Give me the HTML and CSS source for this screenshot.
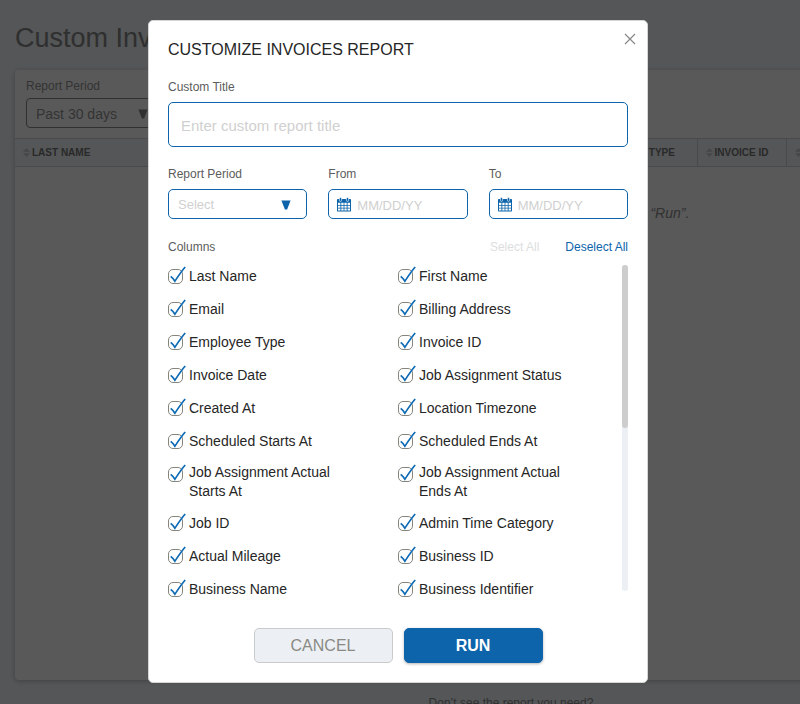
FILE: index.html
```html
<!DOCTYPE html>
<html lang="en">
<head>
<meta charset="utf-8">
<title>Custom Invoices</title>
<link rel="stylesheet" href="styles.css">
</head>
<body>
<svg class="sprite" aria-hidden="true">
  <symbol id="tick" viewBox="0 0 18 22"><path d="M2.7 11.4C4.3 12.6 5.7 14.2 6.9 16.2C9 13 13 6.8 17.2 2" fill="none" stroke="currentColor" stroke-width="1.7"/></symbol>
  <symbol id="arrow" viewBox="0 0 10 10"><path d="M0.4 0.5H9.6L6.1 9.6H3.9Z" fill="currentColor"/></symbol>
  <symbol id="sort" viewBox="0 0 7 9"><path d="M0 3.8L3.5 0L7 3.8ZM0 5.2H7L3.5 9Z" fill="currentColor"/></symbol>
  <symbol id="calendar" viewBox="0 0 15 15">
    <path d="M0 3C0 2.4.4 2 1 2H13C13.6 2 14 2.4 14 3V13.5C14 14.1 13.6 14.5 13 14.5H1C.4 14.5 0 14.1 0 13.5Z" fill="currentColor"/>
    <path d="M1 5.8H3.4V7.9H1ZM4.3 5.8H6.6V7.9H4.3ZM7.4 5.8H9.7V7.9H7.4ZM10.6 5.8H13V7.9H10.6ZM1 8.8H3.4V10.7H1ZM4.3 8.8H6.6V10.7H4.3ZM7.4 8.8H9.7V10.7H7.4ZM10.6 8.8H13V10.7H10.6ZM1 11.5H3.4V13.5H1ZM4.3 11.5H6.6V13.5H4.3ZM7.4 11.5H9.7V13.5H7.4ZM10.6 11.5H13V13.5H10.6Z" fill="#fff"/>
    <rect x="2.4" y=".6" width="2.2" height="3.8" rx="1.1" fill="currentColor" stroke="#fff" stroke-width=".6"/>
    <rect x="9.4" y=".6" width="2.2" height="3.8" rx="1.1" fill="currentColor" stroke="#fff" stroke-width=".6"/>
  </symbol>
</svg>

<main class="page">
  <h1 class="page-title">Custom Invoices</h1>
  <section class="report">
    <div class="filters">
      <label class="filter-label" for="page-period">Report Period</label>
      <div class="select-wrap page-select">
        <select id="page-period"><option>Past 30 days</option></select>
        <svg class="arrow"><use href="#arrow"/></svg>
      </div>
    </div>
    <table class="grid">
      <colgroup><col class="c-wide"><col class="c-wide"><col class="c-wide"><col class="c-type"><col class="c-id"><col></colgroup>
      <thead>
        <tr>
          <th><svg class="sort"><use href="#sort"/></svg>LAST NAME</th>
          <th><svg class="sort"><use href="#sort"/></svg>FIRST NAME</th>
          <th><svg class="sort"><use href="#sort"/></svg>EMAIL</th>
          <th><svg class="sort"><use href="#sort"/></svg>EMPLOYEE TYPE</th>
          <th><svg class="sort"><use href="#sort"/></svg>INVOICE ID</th>
          <th><svg class="sort"><use href="#sort"/></svg></th>
        </tr>
      </thead>
    </table>
    <p class="hint">To see a custom report, select your filters and click “Run”.</p>
  </section>
  <p class="help">Don’t see the report you need?</p>
</main>

<div class="overlay">
  <form class="modal" role="dialog" aria-labelledby="modal-title">
    <button class="close" type="button" aria-label="Close"><svg viewBox="0 0 12 12"><path d="M1 1L11 11M11 1L1 11" fill="none" stroke="currentColor" stroke-width="1.2"/></svg></button>
    <h2 class="modal-title" id="modal-title">CUSTOMIZE INVOICES REPORT</h2>

    <div class="field">
      <label for="custom-title">Custom Title</label>
      <input class="box title-input" id="custom-title" type="text" placeholder="Enter custom report title">
    </div>

    <div class="range">
      <div class="field">
        <label for="period">Report Period</label>
        <div class="select-wrap">
          <select class="box" id="period"><option>Select</option></select>
          <svg class="arrow"><use href="#arrow"/></svg>
        </div>
      </div>
      <div class="field">
        <label for="from">From</label>
        <div class="box date"><svg class="calendar"><use href="#calendar"/></svg><input id="from" type="text" placeholder="MM/DD/YY"></div>
      </div>
      <div class="field">
        <label for="to">To</label>
        <div class="box date"><svg class="calendar"><use href="#calendar"/></svg><input id="to" type="text" placeholder="MM/DD/YY"></div>
      </div>
    </div>

    <div class="columns-head">
      <span>Columns</span>
      <button class="link muted" type="button">Select All</button>
      <button class="link" type="button">Deselect All</button>
    </div>

    <div class="columns">
      <div class="list">
        <label class="item"><span class="check"><input type="checkbox" checked><svg><use href="#tick"/></svg></span><span class="name">Last Name</span></label>
        <label class="item"><span class="check"><input type="checkbox" checked><svg><use href="#tick"/></svg></span><span class="name">Email</span></label>
        <label class="item"><span class="check"><input type="checkbox" checked><svg><use href="#tick"/></svg></span><span class="name">Employee Type</span></label>
        <label class="item"><span class="check"><input type="checkbox" checked><svg><use href="#tick"/></svg></span><span class="name">Invoice Date</span></label>
        <label class="item"><span class="check"><input type="checkbox" checked><svg><use href="#tick"/></svg></span><span class="name">Created At</span></label>
        <label class="item"><span class="check"><input type="checkbox" checked><svg><use href="#tick"/></svg></span><span class="name">Scheduled Starts At</span></label>
        <label class="item"><span class="check"><input type="checkbox" checked><svg><use href="#tick"/></svg></span><span class="name">Job Assignment Actual Starts At</span></label>
        <label class="item"><span class="check"><input type="checkbox" checked><svg><use href="#tick"/></svg></span><span class="name">Job ID</span></label>
        <label class="item"><span class="check"><input type="checkbox" checked><svg><use href="#tick"/></svg></span><span class="name">Actual Mileage</span></label>
        <label class="item"><span class="check"><input type="checkbox" checked><svg><use href="#tick"/></svg></span><span class="name">Business Name</span></label>
      </div>
      <div class="list">
        <label class="item"><span class="check"><input type="checkbox" checked><svg><use href="#tick"/></svg></span><span class="name">First Name</span></label>
        <label class="item"><span class="check"><input type="checkbox" checked><svg><use href="#tick"/></svg></span><span class="name">Billing Address</span></label>
        <label class="item"><span class="check"><input type="checkbox" checked><svg><use href="#tick"/></svg></span><span class="name">Invoice ID</span></label>
        <label class="item"><span class="check"><input type="checkbox" checked><svg><use href="#tick"/></svg></span><span class="name">Job Assignment Status</span></label>
        <label class="item"><span class="check"><input type="checkbox" checked><svg><use href="#tick"/></svg></span><span class="name">Location Timezone</span></label>
        <label class="item"><span class="check"><input type="checkbox" checked><svg><use href="#tick"/></svg></span><span class="name">Scheduled Ends At</span></label>
        <label class="item"><span class="check"><input type="checkbox" checked><svg><use href="#tick"/></svg></span><span class="name">Job Assignment Actual Ends At</span></label>
        <label class="item"><span class="check"><input type="checkbox" checked><svg><use href="#tick"/></svg></span><span class="name">Admin Time Category</span></label>
        <label class="item"><span class="check"><input type="checkbox" checked><svg><use href="#tick"/></svg></span><span class="name">Business ID</span></label>
        <label class="item"><span class="check"><input type="checkbox" checked><svg><use href="#tick"/></svg></span><span class="name">Business Identifier</span></label>
      </div>
      <div class="track"><div class="thumb"></div></div>
    </div>

    <div class="actions">
      <button class="btn cancel" type="button">CANCEL</button>
      <button class="btn run" type="submit">RUN</button>
    </div>
  </form>
</div>
</body>
</html>
```

FILE: styles.css
```css
* { box-sizing: border-box; }

body {
  margin: 0;
  height: 100vh;
  overflow: hidden;
  background: #f0f6fa;
  font-family: "Liberation Sans", Arial, Helvetica, sans-serif;
  color: #262626;
}

h1, h2, p { margin: 0; font-weight: 400; }
button, input, select { font-family: inherit; }
button { cursor: pointer; }
svg { display: block; }
.sprite { position: absolute; width: 0; height: 0; }

/* Page behind the dialog */
.page {
  min-width: 1022px;
  padding: 20px 15px 0;
}

.page-title {
  font-size: 27px;
  line-height: 36px;
  color: #888;
}

.report {
  margin-top: 14px;
  min-height: 610px;
  background: #fff;
  border-radius: 4px;
  box-shadow: 0 1px 5px rgba(0, 0, 0, .25);
}

.filters { padding: 8px 11px 10px; }

.filter-label {
  display: block;
  margin-bottom: 4px;
  font-size: 12px;
  line-height: 16px;
  color: #949494;
}

.grid {
  width: 100%;
  table-layout: fixed;
  border-collapse: collapse;
}

.c-wide { width: 186px; }
.c-type { width: 124px; }
.c-id { width: 89px; }

.grid th {
  height: 28px;
  padding: 0 8px;
  border: 1px solid #cfd3d6;
  border-left: 0;
  background: #f0f6fa;
  font-size: 10px;
  font-weight: 700;
  text-align: left;
  white-space: nowrap;
  color: #777;
}

.sort {
  display: inline-block;
  width: 7px;
  height: 9px;
  margin-right: 2px;
  vertical-align: -1px;
  color: #cacaca;
}

.hint {
  margin-top: 37px;
  font-size: 14px;
  font-style: italic;
  line-height: 18px;
  text-align: center;
  color: #8c8c8c;
}

.help {
  margin-top: 15px;
  font-size: 12px;
  line-height: 16px;
  text-align: center;
  color: #8c8c8c;
}

/* Dialog */
.overlay {
  position: fixed;
  inset: 0;
  display: flex;
  justify-content: center;
  align-items: flex-start;
  padding: 20px 24px 20px 20px;
  background: rgba(0, 0, 0, .65);
}

.modal {
  position: relative;
  width: 100%;
  max-width: 500px;
  padding: 19px;
  border: 1px solid #d4d6d6;
  border-radius: 5px;
  background: #fff;
}

.modal-title { font-size: 16px; line-height: 20px; }

.close {
  position: absolute;
  top: 8px;
  right: 7px;
  padding: 4px;
  border: 0;
  background: none;
  color: #888;
}

.close svg { width: 12px; height: 12px; }

.field {
  margin-top: 19px;
  font-size: 12px;
  line-height: 16px;
  color: #5c5c5c;
}

.field label { display: block; margin-bottom: 7px; }

.box {
  width: 100%;
  height: 30px;
  border: 1px solid #0d64aa;
  border-radius: 5px;
  background: #fff;
  font-size: 13px;
  color: #d0d0d0;
}

.title-input {
  display: block;
  height: 45px;
  padding: 2px 12px 0;
  font-size: 15px;
}

input::placeholder { color: #d0d0d0; opacity: 1; }

.range {
  display: grid;
  grid-template-columns: repeat(3, minmax(0, 1fr));
  gap: 21px;
}

.select-wrap { position: relative; color: #0d64aa; }
.select-wrap .box { display: block; padding: 0 9px; appearance: none; }

.arrow {
  position: absolute;
  top: 11px;
  right: 16px;
  width: 10px;
  height: 10px;
  pointer-events: none;
}

.page-select { width: 138px; color: #8a8a8a; }

.page-select select {
  display: block;
  width: 100%;
  height: 30px;
  padding: 2px 9px 0;
  border: 1px solid #8a8a8a;
  border-radius: 4px;
  background: transparent;
  font-size: 14px;
  color: #949494;
  appearance: none;
}

.date {
  display: flex;
  align-items: center;
  gap: 5px;
  padding: 0 8px;
}

.date input {
  min-width: 0;
  flex: 1;
  padding: 2px 0 0;
  border: 0;
  background: none;
  font-size: 13px;
}

.calendar { flex: none; width: 15px; height: 15px; color: #0d64aa; }

.columns-head {
  display: flex;
  gap: 26px;
  margin-top: 20px;
  font-size: 12px;
  line-height: 16px;
  color: #5c5c5c;
}

.columns-head span { flex: 1; }

.link {
  padding: 0;
  border: 0;
  background: none;
  font-size: 12px;
  line-height: 16px;
  color: #0d64aa;
}

.link.muted { color: #dcdede; }

.columns {
  position: relative;
  display: grid;
  grid-template-columns: 1fr 1fr;
  margin-top: 10px;
}

.list {
  display: flex;
  flex-direction: column;
  gap: 11px;
  padding-right: 48px;
}

.item {
  display: flex;
  gap: 3px;
  min-height: 22px;
  font-size: 14px;
  line-height: 19px;
}

.name { align-self: center; }

.check {
  position: relative;
  flex: none;
  width: 18px;
  height: 22px;
  padding-top: 4px;
  color: #0d6ab4;
}

.check input {
  display: block;
  width: 15px;
  height: 15px;
  margin: 0;
  border: 1px solid #85857c;
  border-radius: 5px;
  appearance: none;
}

.check svg {
  position: absolute;
  inset: 0;
  width: 18px;
  height: 22px;
  pointer-events: none;
}

.track {
  position: absolute;
  top: 0;
  right: 0;
  bottom: 9px;
  width: 6px;
  border-radius: 3px;
  background: #ecf0f5;
}

.thumb { height: 50%; border-radius: 3px; background: #cdcdcd; }

.actions {
  display: flex;
  justify-content: center;
  gap: 11px;
  margin-top: 28px;
}

.btn {
  width: 139px;
  height: 35px;
  padding: 0;
  border: 1px solid #c9cacb;
  border-radius: 5px;
  font-size: 16px;
}

.cancel { background: #ecf0f5; color: #8a8a83; }

.run {
  border-color: #0d64aa;
  background: #0d64aa;
  box-shadow: 0 1px 3px rgba(0, 0, 0, .3);
  font-weight: 700;
  color: #fff;
}
```
